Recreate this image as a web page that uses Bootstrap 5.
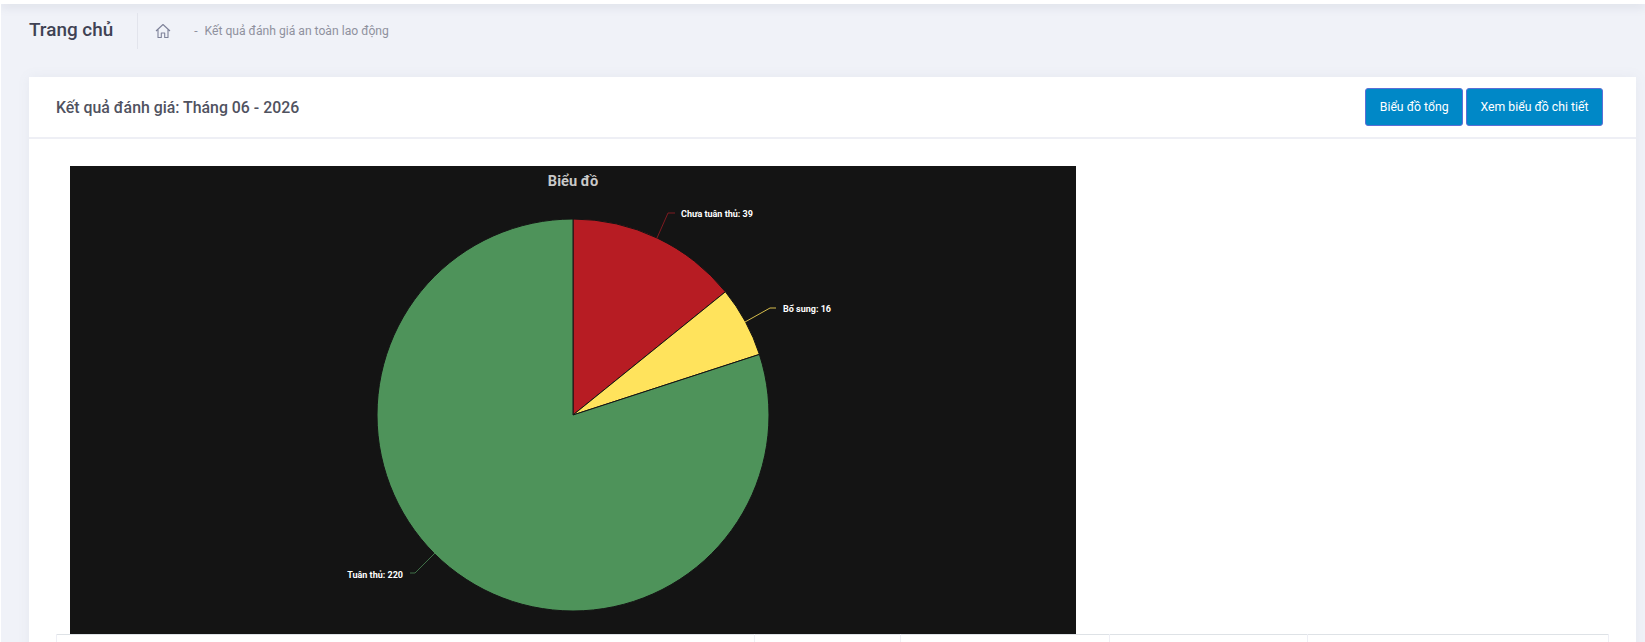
<!DOCTYPE html>
<html lang="en">
<head>
  <meta charset="UTF-8" />
  <title>Kết quả đánh giá</title>
  <meta name="viewport" content="width=device-width, initial-scale=1">
  <link href="https://cdn.jsdelivr.net/npm/bootstrap@5.3.3/dist/css/bootstrap.min.css" rel="stylesheet">
  <style>
    html, body {
      height: 642px;
      overflow: hidden;
    }
    body {
      background-color: #f0f2f8;
      font-family: Roboto, "Liberation Sans", sans-serif;
      border-left: 1px solid #fff;
    }
    .top-strip {
      height: 4px;
      background-color: #fff;
      box-shadow: 0 2px 10px rgba(120, 125, 150, 0.28);
    }
    .page-head {
      height: 73px;
      padding: 9px 0 0 28px;
    }
    .page-title {
      font-size: 18.9px;
      font-weight: 500;
      color: #3f4254;
      line-height: 34px;
      height: 36px;
      padding-right: 24px;
      border-right: 1px solid #e2e4ec;
      margin: 0;
    }
    .crumb {
      font-size: 12.15px;
      color: #8f919e;
      padding-left: 17px;
      height: 36px;
    }
    .crumb svg {
      margin-right: 23px;
    }
    .crumb-dash {
      margin-right: 7px;
    }
    .result-card {
      margin: 0 9px 0 28px;
      background-color: #fff;
      box-shadow: 0 0 12px rgba(120, 125, 150, 0.08);
    }
    .result-head {
      height: 62px;
      padding: 0 33px 0 27px;
      border-bottom: 2px solid #eeeff5;
    }
    .result-title {
      font-size: 15.87px;
      font-weight: 500;
      color: #50525f;
      margin: 2px 0 0;
    }
    .btn-chart {
      background-color: #0088c7;
      border: 1px solid #5b6fd6;
      color: #fff;
      font-size: 12.25px;
      height: 38px;
      border-radius: 3px;
      padding: 0 13.5px;
    }
    .btn-gap {
      gap: 3px;
    }
    .result-body {
      padding: 27px 27px 0;
    }
    .chart-box {
      width: 1006px;
      height: 468px;
      margin-left: 14px;
      display: block;
    }
    .chart-title {
      font-family: Roboto, sans-serif;
      font-size: 14.6px;
      font-weight: 700;
      fill: #c9c9c9;
    }
    .chart-label {
      font-family: Roboto, sans-serif;
      font-size: 9px;
      font-weight: 700;
      fill: #fff;
    }
    .detail-table {
      table-layout: fixed;
    }
    .detail-table td {
      height: 40px;
      border-color: #eeeff5;
    }
    .w-name { width: 698px; }
    .w-a { width: 146px; }
    .w-b { width: 209px; }
    .w-c { width: 198px; }
  </style>
</head>
<body>
  <div class="top-strip"></div>
  <div class="page-head d-flex align-items-start">
    <h1 class="page-title">Trang chủ</h1>
    <div class="crumb d-flex align-items-center">
      <svg width="16" height="16" viewBox="0 0 16 16" fill="none" stroke="#7e8299" stroke-width="1.1" stroke-linejoin="round">
        <path d="M1 8 8 1.5 15 8M3 6.5V14.5H6.3V10H9.7V14.5H13V6.5"/>
      </svg>
      <span class="crumb-dash">-</span>
      <span>Kết quả đánh giá an toàn lao động</span>
    </div>
  </div>

  <div class="result-card">
    <div class="result-head d-flex align-items-center justify-content-between">
      <h2 class="result-title">Kết quả đánh giá: Tháng 06 - 2026</h2>
      <div class="d-flex btn-gap">
        <button class="btn btn-chart" type="button">Biểu đồ tổng</button>
        <button class="btn btn-chart" type="button">Xem biểu đồ chi tiết</button>
      </div>
    </div>
    <div class="result-body">
      <!-- pie drawn around (503,249), 275 answers in total -->
      <svg class="chart-box" viewBox="0 0 1006 468">
        <rect width="1006" height="468" fill="#141414"/>
        <text class="chart-title" x="503" y="20" text-anchor="middle">Biểu đồ</text>
        <g stroke="#141414" stroke-width="1" stroke-linejoin="round">
          <path d="M503 249V53A196 196 0 0 1 655.4 125.8Z" fill="#b71c23"/>
          <path d="M503 249 655.4 125.8A196 196 0 0 1 689.4 188.4Z" fill="#ffe35c"/>
          <path d="M503 249 689.4 188.4A196 196 0 1 1 503 53Z" fill="#4e935a"/>
        </g>
        <g fill="none" stroke-width="1">
          <path d="M587 72 598 47H605" stroke="#7d1a20"/>
          <path d="M675 156 700 142H706" stroke="#d6bd4c"/>
          <path d="M365 387 345 407H340" stroke="#3f6f47"/>
        </g>
        <text class="chart-label" x="611" y="50.5">Chưa tuân thủ: 39</text>
        <text class="chart-label" x="713" y="145.5">Bổ sung: 16</text>
        <text class="chart-label" x="333" y="411.5" text-anchor="end">Tuân thủ: 220</text>
      </svg>
      <table class="table table-bordered detail-table mb-0">
        <tbody>
          <tr>
            <td class="w-name"></td>
            <td class="w-a"></td>
            <td class="w-b"></td>
            <td class="w-c"></td>
            <td></td>
          </tr>
        </tbody>
      </table>
    </div>
  </div>
  <script src="https://cdn.jsdelivr.net/npm/bootstrap@5.3.3/dist/js/bootstrap.bundle.min.js"></script>
</body>
</html>
